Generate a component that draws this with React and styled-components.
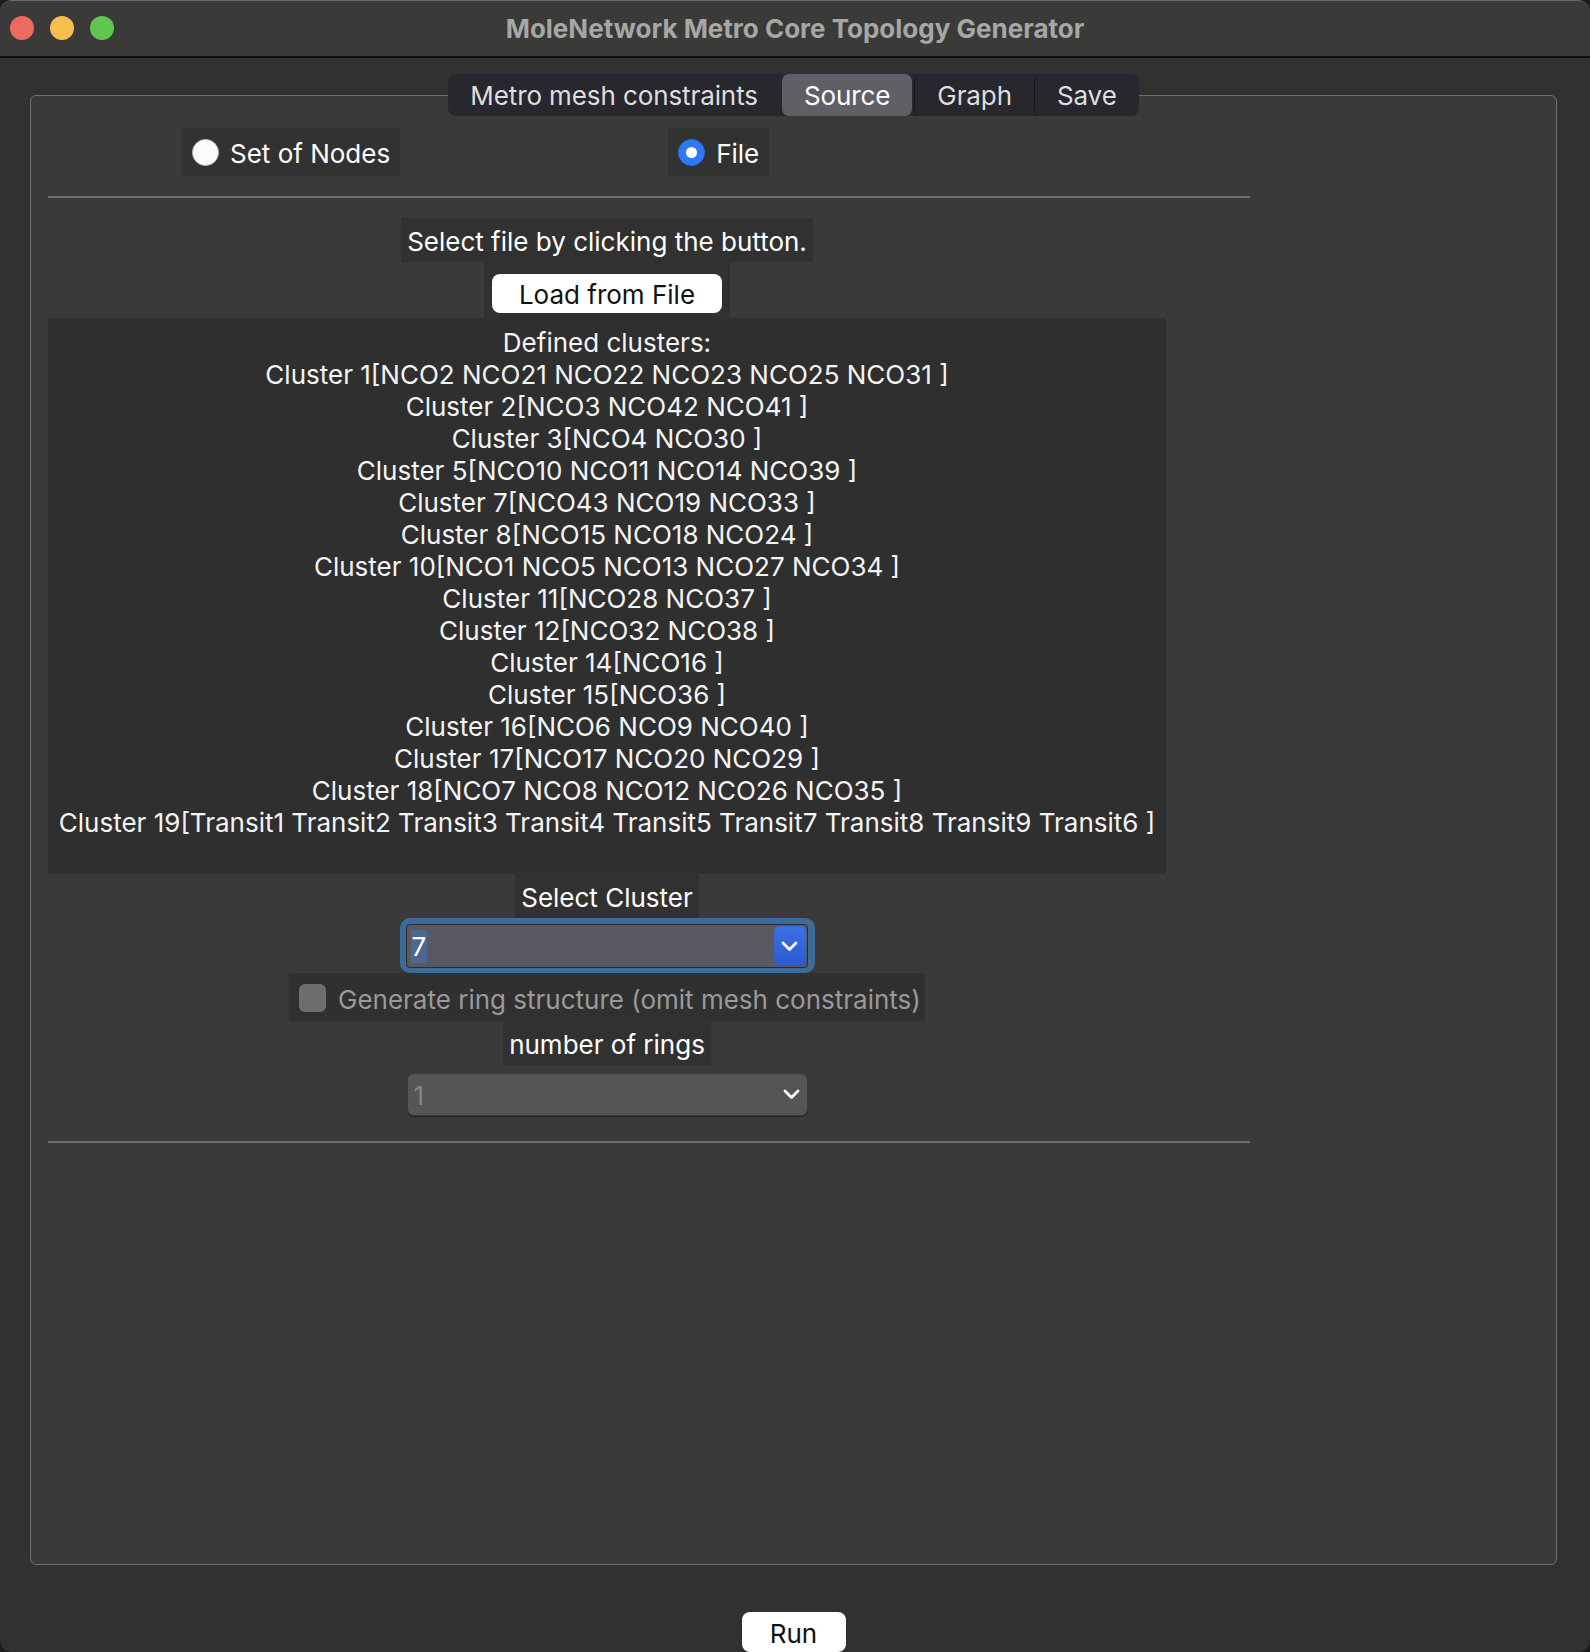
import React from "react"
import styled, { createGlobalStyle } from "styled-components"

const GlobalStyle = createGlobalStyle`
  html, body {
    margin: 0;
    padding: 0;
    background: #1c1c1c;
  }
  body {
    font-family: Inter, "Noto Sans", "Liberation Sans", sans-serif;
  }
`

const clusters = [
  "Cluster 1[NCO2 NCO21 NCO22 NCO23 NCO25 NCO31 ]",
  "Cluster 2[NCO3 NCO42 NCO41 ]",
  "Cluster 3[NCO4 NCO30 ]",
  "Cluster 5[NCO10 NCO11 NCO14 NCO39 ]",
  "Cluster 7[NCO43 NCO19 NCO33 ]",
  "Cluster 8[NCO15 NCO18 NCO24 ]",
  "Cluster 10[NCO1 NCO5 NCO13 NCO27 NCO34 ]",
  "Cluster 11[NCO28 NCO37 ]",
  "Cluster 12[NCO32 NCO38 ]",
  "Cluster 14[NCO16 ]",
  "Cluster 15[NCO36 ]",
  "Cluster 16[NCO6 NCO9 NCO40 ]",
  "Cluster 17[NCO17 NCO20 NCO29 ]",
  "Cluster 18[NCO7 NCO8 NCO12 NCO26 NCO35 ]",
  "Cluster 19[Transit1 Transit2 Transit3 Transit4 Transit5 Transit7 Transit8 Transit9 Transit6 ]",
]

const tabs = ["Metro mesh constraints", "Source", "Graph", "Save"]

const StyledWindow = styled.div`
  width: 1590px;
  height: 1652px;
  box-sizing: border-box;
  display: flex;
  flex-direction: column;
  background-color: #313131;
  border-radius: 12px;
  border-top: 1px solid #6a6a6a;
  overflow: hidden;
  color: #f2f2f2;
`

const StyledTitleBar = styled.header`
  position: relative;
  flex: none;
  height: 55px;
  display: flex;
  align-items: center;
  justify-content: center;
  background-color: #3a3a39;
  border-bottom: 2px solid #121212;
`

const StyledLights = styled.div`
  position: absolute;
  left: 10px;
  top: 15px;
  display: flex;
  gap: 16px;
`

const StyledLight = styled.span`
  width: 24px;
  height: 24px;
  border-radius: 50%;
  background-color: ${(p) => p.color};
`

const StyledTitle = styled.h1`
  margin: 0;
  font-size: 26px;
  font-weight: 700;
  color: #a7a7a5;
`

const StyledBody = styled.main`
  display: flex;
  flex-direction: column;
  align-items: center;
  padding: 16px 33px 0 30px;
`

const StyledTabBar = styled.nav`
  position: relative;
  z-index: 1;
  display: flex;
  height: 42px;
  margin-bottom: -21px;
  background-color: #28272d;
  border-radius: 8px;
`

const StyledTab = styled.div`
  display: flex;
  align-items: center;
  padding: 0 22px;
  font-size: 26px;
  letter-spacing: -0.1px;
  color: ${(p) => (p.$active ? "#ffffff" : "#dedede")};
  background-color: ${(p) => (p.$active ? "#605f65" : "transparent")};
  border-radius: 7px;
  border-left: ${(p) => (p.$divided ? "1px solid #16161a" : "none")};
  margin: ${(p) => (p.$active ? "0 2px" : "0")};
`

const StyledPanel = styled.section`
  align-self: stretch;
  box-sizing: border-box;
  height: 1470px;
  padding: 32px 17px 0;
  background-color: #3a3a3a;
  border: 1px solid #6e6e6e;
  border-radius: 6px;
`

const StyledColumn = styled.div`
  width: 1202px;
  display: flex;
  flex-direction: column;
`

const StyledRadioRow = styled.div`
  display: flex;
  gap: 268px;
  padding-left: 134px;
`

const StyledRadioItem = styled.label`
  display: flex;
  align-items: center;
  gap: 11px;
  height: 48px;
  padding: 0 10px;
  background-color: #323232;
  font-size: 26px;
  color: #ffffff;
`

const StyledText = styled.span`
  padding-top: ${(p) => p.$shift || 3}px;
`

const StyledRadio = styled.span`
  box-sizing: border-box;
  width: 27px;
  height: 27px;
  border-radius: 50%;
  display: flex;
  align-items: center;
  justify-content: center;
  background-color: ${(p) => (p.$checked ? "#2d7bf4" : "#fbfbfb")};
  border: 1px solid ${(p) => (p.$checked ? "#2a6fdc" : "#bcbcbc")};

  &::after {
    content: "";
    display: ${(p) => (p.$checked ? "block" : "none")};
    width: 11px;
    height: 11px;
    border-radius: 50%;
    background-color: #ffffff;
  }
`

const StyledDivider = styled.hr`
  margin: ${(p) => p.$top}px 0 0;
  border: none;
  height: 2px;
  background-color: #6d6d6d;
`

const StyledCenter = styled.div`
  width: 1118px;
  display: flex;
  flex-direction: column;
  align-items: center;
`

const StyledLabel = styled.div`
  box-sizing: border-box;
  height: ${(p) => p.$height || 44}px;
  line-height: ${(p) => (p.$height || 44) - 3}px;
  padding: 3px 6px 0;
  margin-top: ${(p) => p.$top || 0}px;
  background-color: #313131;
  font-size: 26px;
  color: #ffffff;
  white-space: nowrap;
`

const StyledButtonWrap = styled.div`
  padding: 12px 8px 5px;
  background-color: #313131;
`

const StyledButton = styled.button`
  display: block;
  width: ${(p) => p.$width}px;
  height: ${(p) => p.$height}px;
  padding: 2px 0 0;
  border: none;
  border-radius: 8px;
  background-color: #ffffff;
  color: #111111;
  font-family: inherit;
  font-size: 26px;
`

const StyledClusters = styled.div`
  align-self: stretch;
  box-sizing: border-box;
  height: 556px;
  padding-top: 9px;
  background-color: #2f2f2f;
  text-align: center;
  font-size: 26px;
  line-height: 32px;
  color: #f4f4f4;
  white-space: nowrap;
`

const StyledFocusRing = styled.div`
  box-sizing: border-box;
  width: 415px;
  height: 55px;
  padding: 6px 7px 5px 6px;
  background-color: #3c6c99;
  border-radius: 10px;
`

const StyledCombo = styled.div`
  box-sizing: border-box;
  height: 100%;
  display: flex;
  align-items: center;
  justify-content: space-between;
  padding: 1px 1px 1px 4px;
  background-color: #5a5860;
  border: 1px solid #2b2b30;
  border-radius: 4px;
  font-size: 26px;
`

const StyledSelection = styled.span`
  padding: 1px 1px 0;
  line-height: 32px;
  background-color: #4b6890;
  color: #ffffff;
`

const StyledComboButton = styled.span`
  align-self: stretch;
  width: 32px;
  display: flex;
  align-items: center;
  justify-content: center;
  border-radius: 6px;
  background: linear-gradient(#3b70e2, #2c5bd1);
`

const StyledCheckRow = styled.label`
  display: flex;
  align-items: center;
  gap: 12px;
  width: 636px;
  box-sizing: border-box;
  height: 48px;
  padding-left: 10px;
  background-color: #303030;
  font-size: 26px;
  color: #9a9a9a;
`

const StyledCheckbox = styled.span`
  width: 27px;
  height: 28px;
  margin-top: 1px;
  border-radius: 6px;
  background-color: #6e6e6e;
`

const StyledDisabledCombo = styled.div`
  box-sizing: border-box;
  width: 401px;
  height: 43px;
  margin-top: 8px;
  display: flex;
  align-items: center;
  justify-content: space-between;
  padding: 0 7px 0 6px;
  background-color: #555557;
  border: 1px solid #3a3a3c;
  border-radius: 7px;
  box-shadow: 0 1px 1px #222222;
  font-size: 26px;
  color: #858585;
`

const StyledFooter = styled.footer`
  display: flex;
  justify-content: center;
  padding: 47px 33px 0 30px;
`

const Chevron = () => (
  <svg width="17" height="11" viewBox="0 0 17 11">
    <polyline
      points="2,2 8.5,8.5 15,2"
      fill="none"
      stroke="#ffffff"
      strokeWidth="2.8"
      strokeLinecap="round"
      strokeLinejoin="round"
    />
  </svg>
)

const App = () => {
  return (
    <>
      <GlobalStyle />
      <StyledWindow>
        <StyledTitleBar>
          <StyledLights>
            <StyledLight color="#ee6a5f" />
            <StyledLight color="#f5be4f" />
            <StyledLight color="#61c554" />
          </StyledLights>
          <StyledTitle>MoleNetwork Metro Core Topology Generator</StyledTitle>
        </StyledTitleBar>

        <StyledBody>
          <StyledTabBar>
            {tabs.map((tab, i) => (
              <StyledTab key={tab} $active={tab === "Source"} $divided={i > 1}>
                {tab}
              </StyledTab>
            ))}
          </StyledTabBar>

          <StyledPanel>
            <StyledColumn>
              <StyledRadioRow>
                <StyledRadioItem>
                  <StyledRadio />
                  <StyledText $shift={2}>Set of Nodes</StyledText>
                </StyledRadioItem>
                <StyledRadioItem>
                  <StyledRadio $checked />
                  <StyledText $shift={2}>File</StyledText>
                </StyledRadioItem>
              </StyledRadioRow>

              <StyledDivider $top={20} />

              <StyledCenter>
                <StyledLabel $top={20}>Select file by clicking the button.</StyledLabel>
                <StyledButtonWrap>
                  <StyledButton $width={230} $height={39}>
                    Load from File
                  </StyledButton>
                </StyledButtonWrap>

                <StyledClusters>
                  <div>Defined clusters:</div>
                  {clusters.map((line) => (
                    <div key={line}>{line}</div>
                  ))}
                </StyledClusters>

                <StyledLabel $height={44}>Select Cluster</StyledLabel>
                <StyledFocusRing>
                  <StyledCombo>
                    <StyledSelection>7</StyledSelection>
                    <StyledComboButton>
                      <Chevron />
                    </StyledComboButton>
                  </StyledCombo>
                </StyledFocusRing>

                <StyledCheckRow>
                  <StyledCheckbox />
                  <StyledText $shift={4}>Generate ring structure (omit mesh constraints)</StyledText>
                </StyledCheckRow>

                <StyledLabel $height={44}>number of rings</StyledLabel>
                <StyledDisabledCombo>
                  <StyledText $shift={2}>1</StyledText>
                  <Chevron />
                </StyledDisabledCombo>
              </StyledCenter>

              <StyledDivider $top={25} />
            </StyledColumn>
          </StyledPanel>
        </StyledBody>

        <StyledFooter>
          <StyledButton $width={104} $height={40}>
            Run
          </StyledButton>
        </StyledFooter>
      </StyledWindow>
    </>
  )
}

export default App
